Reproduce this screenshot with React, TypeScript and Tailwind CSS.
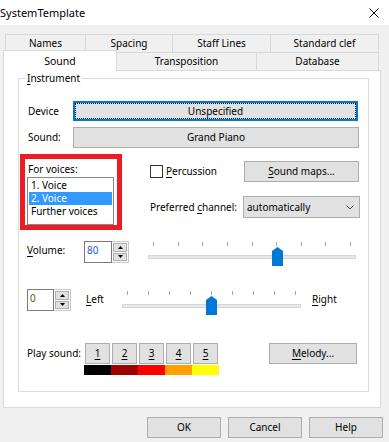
import React from "react";

const U = ({ children }: { children: React.ReactNode }) => (
  <span className="underline decoration-1 underline-offset-[2px]">{children}</span>
);

const Btn = ({ className = "", children }: { className?: string; children?: React.ReactNode }) => (
  <div className={`flex items-center justify-center bg-[#e1e1e1] border border-[#adadad] ${className}`}>{children}</div>
);

const Spin = ({ value, inputW, color }: { value: string; inputW: string; color: string }) => (
  <div className="flex h-[22px]">
    <div className={`${inputW} h-full border border-[#7a7a7a] bg-white pl-[2px] pt-[2px] ${color}`}>{value}</div>
    <div className="w-[17px] h-full flex flex-col gap-[1px] border-y border-r border-[#c8c8c8] p-[1px] bg-white">
      <div className="flex-1 flex items-center justify-center bg-[#e1e1e1] border border-[#adadad]">
        <svg width="5" height="3" viewBox="0 0 5 3"><path d="M2.5 0L5 3H0Z" fill="#000" /></svg>
      </div>
      <div className="flex-1 flex items-center justify-center bg-[#e1e1e1] border border-[#adadad]">
        <svg width="5" height="3" viewBox="0 0 5 3"><path d="M0 0H5L2.5 3Z" fill="#000" /></svg>
      </div>
    </div>
  </div>
);

// trackbar drawn as svg: ticks, track, thumb
const Slider = ({ w, h, t0, t1, ty, trackY, thumbX, thumbY }: {
  w: number; h: number; t0: number; t1: number; ty: number; trackY: number; thumbX: number; thumbY: number;
}) => {
  const ticks = Array.from({ length: 9 }, (_, i) => Math.round(t0 + ((t1 - t0) * i) / 8));
  return (
    <svg width={w} height={h} viewBox={`0 0 ${w} ${h}`}>
      {ticks.map((x) => (
        <rect key={x} x={x} y={ty} width="1" height="4" fill="#a8a8a8" />
      ))}
      <rect x="1.5" y={trackY + 0.5} width={w - 3} height="3" fill="#e7eaea" stroke="#d6d6d6" />
      <path
        d={`M${thumbX} ${thumbY + 4}L${thumbX + 5.5} ${thumbY}L${thumbX + 11} ${thumbY + 4}V${thumbY + 19}H${thumbX}Z`}
        fill="#0078d7"
      />
    </svg>
  );
};

const Tab = ({ w, children, last = false }: { w: string; children: React.ReactNode; last?: boolean }) => (
  <div className={`${w} h-full flex items-center justify-center border-t border-l border-[#d9d9d9] ${last ? "border-r" : ""}`}>
    {children}
  </div>
);

export default function App() {
  return (
    <div className="w-[389px] h-[442px] overflow-hidden bg-[#f0f0f0] text-black text-[10px] leading-[13px] font-['Noto_Sans',sans-serif]">
      {/* Title bar */}
      <div className="h-[25px] bg-white flex items-center justify-between">
        <span className="text-[11px] leading-[14px]">SystemTemplate</span>
        <svg width="10" height="10" viewBox="0 0 10 10" className="mr-[10px]">
          <path d="M0.5 0.5L9.5 9.5M9.5 0.5L0.5 9.5" stroke="#000" strokeWidth="1" />
        </svg>
      </div>

      {/* Tabs */}
      <div className="pt-[9px]">
        <div className="flex ml-[5px] h-[18px]">
          <Tab w="w-[80px]">Names</Tab>
          <Tab w="w-[87px]">Spacing</Tab>
          <Tab w="w-[98px]">Staff Lines</Tab>
          <Tab w="w-[109px]" last>Standard clef</Tab>
        </div>
        <div className="flex items-end h-[18px]">
          <div className="relative z-10 ml-[3px] -mb-[1px] w-[114px] h-[21px] flex items-center justify-center bg-white border-t border-x border-[#d9d9d9] text-[10.5px]">
            Sound
          </div>
          <div className="w-[140px] h-full flex items-center justify-center border-t border-r border-[#d9d9d9]">Transposition</div>
          <div className="w-[122px] h-full flex items-center justify-center border-t border-r border-[#d9d9d9]">Database</div>
        </div>
      </div>

      {/* Tab panel */}
      <div className="ml-[3px] w-[378px] h-[338px] bg-white border border-[#d9d9d9] pt-[7px]">
        <div className="relative ml-[14px] w-[351px] h-[314px] border border-[#dcdcdc]">
          <span className="absolute left-[7px] -top-[7px] bg-white px-[1px]">
            <U>I</U>nstrument
          </span>

          <div className="flex flex-col">
            {/* Device */}
            <div className="mt-[22px] flex items-center h-[20px] pl-[9px]">
              <span className="w-[45px]">Device</span>
              <div className="w-[285px] h-[20px] border-2 border-[#0078d7] bg-[#e1e1e1]">
                <div className="w-full h-full border border-dotted border-black flex items-center justify-center">
                  Unspecified
                </div>
              </div>
            </div>

            {/* Sound */}
            <div className="mt-[6px] flex items-center h-[21px] pl-[9px]">
              <span className="w-[45px]">Sound:</span>
              <Btn className="w-[286px] h-[21px]">Grand Piano</Btn>
            </div>

            {/* Voices + percussion */}
            <div className="mt-[6px] flex">
              <div className="ml-[1px] w-[102px] h-[76px] border-[5px] border-[#ed1c24] pl-[3px] pt-[4px]">
                <div>For voices:</div>
                <div className="mt-[1px] -ml-[1px] w-[87px] h-[48px] border border-[#828790] p-[1px]">
                  <div className="h-[13px] pl-[2px]">1. Voice</div>
                  <div className="h-[13px] pl-[2px] bg-[#3399ff] text-white">2. Voice</div>
                  <div className="h-[13px] pl-[2px]">Further voices</div>
                </div>
              </div>

              <div className="ml-[28px] mt-[7px] w-[210px] flex flex-col">
                <div className="flex items-center justify-between h-[21px]">
                  <div className="flex items-center">
                    <div className="w-[13px] h-[13px] border border-[#333] bg-white" />
                    <span className="ml-[3px]"><U>P</U>ercussion</span>
                  </div>
                  <Btn className="w-[115px] h-[21px] mr-[1px]"><span><U>S</U>ound maps...</span></Btn>
                </div>
                <div className="mt-[14px] flex items-center justify-between h-[22px]">
                  <span>Preferred <U>c</U>hannel:</span>
                  <div className="w-[117px] h-[22px] flex items-center justify-between bg-[#e1e1e1] border border-[#adadad] pl-[3px] pr-[5px]">
                    <span>automatically</span>
                    <svg width="8" height="5" viewBox="0 0 8 5">
                      <path d="M0.5 0.5L4 4L7.5 0.5" stroke="#444" fill="none" strokeWidth="1" />
                    </svg>
                  </div>
                </div>
              </div>
            </div>

            {/* Volume */}
            <div className="mt-[11px] flex items-start h-[26px] pl-[8px]">
              <span className="w-[57px] mt-[3px]"><U>V</U>olume:</span>
              <Spin value="80" inputW="w-[28px]" color="text-[#1d5bbf]" />
              <div className="ml-[18px]">
                <Slider w={210} h={26} t0={6} t1={203} ty={1} trackY={14} thumbX={125} thumbY={6} />
              </div>
            </div>

            {/* Pan */}
            <div className="mt-[22px] flex items-start h-[27px] pl-[8px]">
              <Spin value="0" inputW="w-[27px]" color="text-[#6b5420]" />
              <span className="ml-[15px] w-[35px] mt-[4px]"><U>L</U>eft</span>
              <Slider w={181} h={27} t0={6} t1={174} ty={2} trackY={15} thumbX={85} thumbY={7} />
              <span className="ml-[10px] mt-[4px]"><U>R</U>ight</span>
            </div>

            {/* Play sound */}
            <div className="mt-[27px] flex items-start pl-[8px]">
              <span className="w-[58px] h-[21px] flex items-center">Play sound:</span>
              <div className="flex flex-col">
                <div className="flex gap-[2px]">
                  {["1", "2", "3", "4", "5"].map((n) => (
                    <Btn key={n} className="w-[25px] h-[21px]"><U>{n}</U></Btn>
                  ))}
                </div>
                <div className="mt-[1px] -ml-[1px] flex h-[10px]">
                  <div className="w-[27px] bg-black" />
                  <div className="w-[27px] bg-[#a00000]" />
                  <div className="w-[27px] bg-[#ff0000]" />
                  <div className="w-[27px] bg-[#ffa000]" />
                  <div className="w-[27px] bg-[#ffff00]" />
                </div>
              </div>
              <Btn className="ml-[50px] w-[88px] h-[21px]"><span><U>M</U>elody...</span></Btn>
            </div>
          </div>
        </div>
      </div>

      {/* Dialog buttons */}
      <div className="mt-[9px] flex justify-end gap-[7px] pr-[6px]">
        <Btn className="w-[74px] h-[21px]">OK</Btn>
        <Btn className="w-[74px] h-[21px]">Cancel</Btn>
        <Btn className="w-[74px] h-[21px]">Help</Btn>
      </div>
    </div>
  );
}
